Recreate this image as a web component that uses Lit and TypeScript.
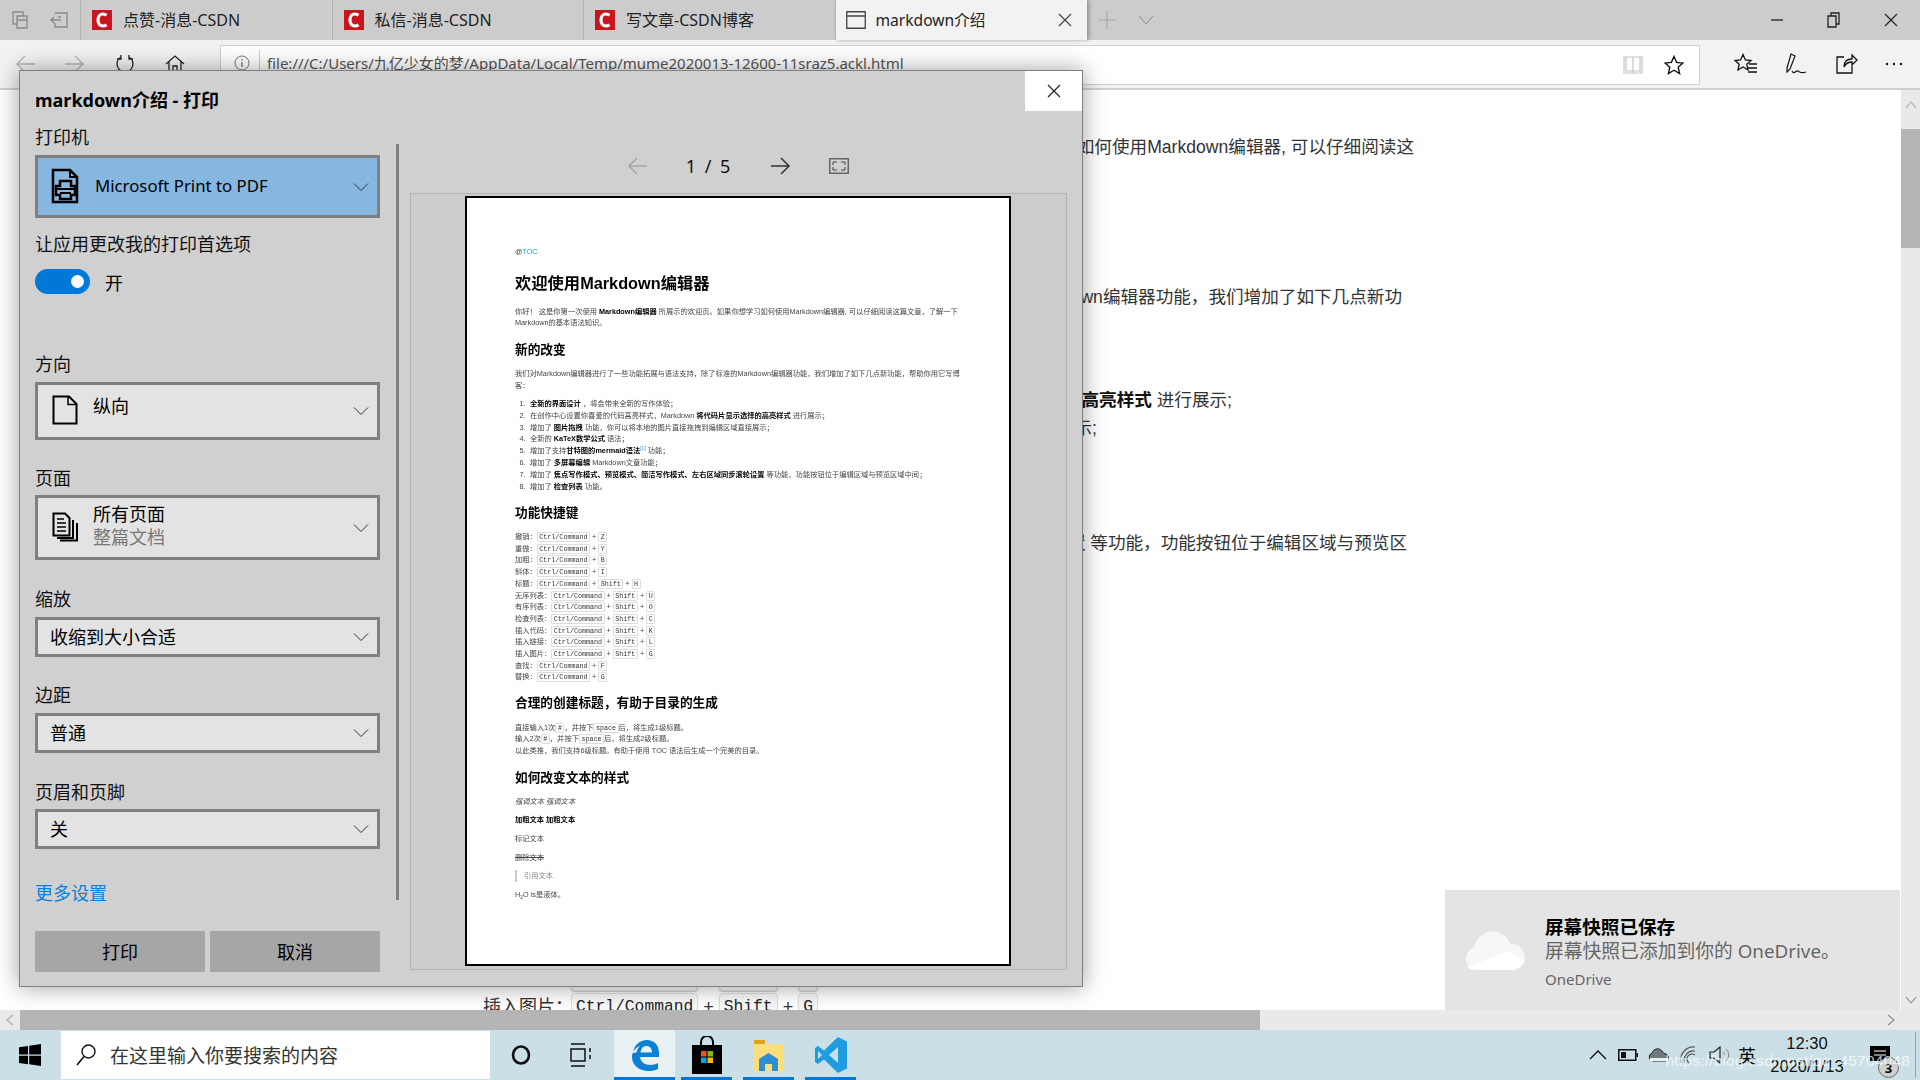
import { LitElement, html, css } from "lit";
import { customElement } from "lit/decorators.js";

const chevron = html`<svg class="chev" width="16" height="10" viewBox="0 0 16 10"><path d="M1 1.5 8 8.5 15 1.5" fill="none" stroke="#333" stroke-width="1"/></svg>`;

const csdn = html`<svg width="20" height="20" viewBox="0 0 20 20"><rect width="20" height="20" fill="#c9151e"/><path d="M14.5 5.2C13.3 4.3 12 4 10.8 4 8 4 6 6.500 6 10s2 6 4.800 6c1.200 0 2.500-.3 3.700-1.200" fill="none" stroke="#fff" stroke-width="3.200"/></svg>`;

const printerIcon = html`<svg width="28" height="36" viewBox="0 0 28 36"><path d="M2 2H19L26 9V34H2Z" fill="none" stroke="#000" stroke-width="2.500"/><path d="M19 2V9H26" fill="none" stroke="#000" stroke-width="2"/><path d="M9 13H20V18H24V27H20V31H9V27H5V18H9Z" fill="none" stroke="#000" stroke-width="2.500"/><path d="M5 21H24M9 25H20" stroke="#000" stroke-width="2"/></svg>`;

const pageIcon = html`<svg width="26" height="30" viewBox="0 0 26 30"><path d="M1.500 1.500H17L24.500 9V28.500H1.500Z" fill="none" stroke="#000" stroke-width="2"/><path d="M16 1.500V9.500H24.500" fill="none" stroke="#000" stroke-width="1.500"/></svg>`;

const pagesIcon = html`<svg width="26" height="30" viewBox="0 0 26 30"><path d="M1.500 1.500H13L17.500 6V23.500H1.500Z" fill="none" stroke="#000" stroke-width="2"/><path d="M5 26H21V8M8 28.500H25V11" fill="none" stroke="#000" stroke-width="2"/><path d="M5 7H12M5 11H14M5 15H14M5 19H14" stroke="#000" stroke-width="1.500"/></svg>`;

const windowsLogo = html`<svg width="22" height="22" viewBox="0 0 22 22"><path d="M0 3.200 9 2V10.500H0ZM10.200 1.800 22 0V10.500H10.200ZM0 11.700H9V20.200L0 19ZM10.200 11.700H22V22L10.200 20.300Z" fill="#000"/></svg>`;

const edgeIcon = html`<svg width="30" height="32" viewBox="0 0 30 32"><path d="M3 14C4 6 10 1 17 1c7 0 12 5 12 13v4H10c.5 5 5 8 10 8 3 0 6-1 8-2v6c-3 1.500-6 2-9 2C9 32 2 26 2 18c0-5 3-9 8-11-2 2-3 4-3.500 6.500ZM10.500 13.500H22c0-4-2-6.500-5.500-6.500S11 9.500 10.500 13.500Z" fill="#0a7fd6" fill-rule="evenodd"/></svg>`;

const storeIcon = html`<svg width="30" height="38" viewBox="0 0 30 38"><path d="M9 10V6a6 6 0 0 1 12 0V10" fill="none" stroke="#000" stroke-width="2"/><rect y="9" width="30" height="29" fill="#000"/><rect x="9" y="15" width="5.500" height="5.500" fill="#f25022"/><rect x="15.500" y="15" width="5.500" height="5.500" fill="#7fba00"/><rect x="9" y="21.500" width="5.500" height="5.500" fill="#00a4ef"/><rect x="15.500" y="21.500" width="5.500" height="5.500" fill="#ffb900"/></svg>`;

const folderIcon = html`<svg width="29" height="32" viewBox="0 0 29 32"><path d="M0 1H11V6H0Z" fill="#e0a020"/><rect y="5" width="29" height="27" fill="#fbdd7c"/><path d="M5 32V20L14.500 14 24 20V32H18V25H11V32Z" fill="#2d8ed0"/></svg>`;

const vscodeIcon = html`<svg width="32" height="36" viewBox="0 0 32 36"><path d="M23 0 32 4.500V31.500L23 36 9 22.500 3 27 0 25V11L3 9 9 13.500ZM23 10 14 18 23 26ZM3 14V22L7 18Z" fill="#1f9ce0" fill-rule="evenodd"/></svg>`;

interface Shortcut { label: string; keys: string[]; }
const shortcuts: Shortcut[] = [
  { label: "撤销：", keys: ["Ctrl/Command", "Z"] },
  { label: "重做：", keys: ["Ctrl/Command", "Y"] },
  { label: "加粗：", keys: ["Ctrl/Command", "B"] },
  { label: "斜体：", keys: ["Ctrl/Command", "I"] },
  { label: "标题：", keys: ["Ctrl/Command", "Shift", "H"] },
  { label: "无序列表：", keys: ["Ctrl/Command", "Shift", "U"] },
  { label: "有序列表：", keys: ["Ctrl/Command", "Shift", "O"] },
  { label: "检查列表：", keys: ["Ctrl/Command", "Shift", "C"] },
  { label: "插入代码：", keys: ["Ctrl/Command", "Shift", "K"] },
  { label: "插入链接：", keys: ["Ctrl/Command", "Shift", "L"] },
  { label: "插入图片：", keys: ["Ctrl/Command", "Shift", "G"] },
  { label: "查找：", keys: ["Ctrl/Command", "F"] },
  { label: "替换：", keys: ["Ctrl/Command", "G"] },
];

const docLines = [
  { end: 487, cls: "d1", t: html`如果你想学习如何使用Markdown编辑器, 可以仔细阅读这` },
  { end: 499, cls: "d2", t: html`除了标准的Markdown编辑器功能，我们增加了如下几点新功` },
  { end: 669, cls: "d3", t: html`Markdown <b>将代码片显示选择的高亮样式</b> 进行展示;` },
  { end: 804, cls: "d4", t: html`你可以将本地的图片直接拖拽到编辑区域直接展示;` },
  { end: 494, cls: "d5", t: html`<b>左右区域同步滚轮设置</b> 等功能，功能按钮位于编辑区域与预览区` },
];

@customElement("app-root")
export class AppRoot extends LitElement {
  static styles = css`
    :host { display: flex; flex-direction: column; width: 1920px; height: 1080px; overflow: hidden; position: relative; background: #fff; font-family: "Noto Sans", "Noto Sans CJK SC", sans-serif; color: #000; }
    * { box-sizing: border-box; }
    svg { display: block; flex: none; }

    .tabbar { height: 40px; background: #ccc; display: flex; align-items: center; flex: none; }
    .tab-tools { width: 80px; display: flex; align-items: center; padding-left: 12px; gap: 22px; }
    .tab { width: 251.500px; height: 40px; display: flex; align-items: center; padding-left: 11px; gap: 11px; border-left: 1px solid #b5b5b5; font-size: 16px; color: #222; }
    .tab span { position: relative; top: -1px; }
    .tab.active { background: #f2f2f2; width: 252px; box-shadow: 2px 0 4px rgba(0,0,0,.3); position: relative; color: #222; padding-left: 10px; gap: 10px; font-size: 15.600px; }
    .tab.active .x { margin-left: auto; margin-right: 15px; }
    .new { margin-left: 11px; }
    .drop { margin-left: 22px; }
    .win { margin-left: auto; display: flex; align-items: center; margin-right: 1px; }
    .win span { width: 57px; display: flex; justify-content: center; }

    .toolbar { height: 50px; background: #f2f2f2; border-bottom: 2px solid #d0d0d0; display: flex; align-items: center; flex: none; padding-left: 15px; }
    .nav-btn { width: 50px; display: flex; }
    .url { position: absolute; left: 220px; top: 45px; width: 1480px; height: 40px; background: #fff; border: 1px solid #d0d0d0; display: flex; align-items: center; padding-left: 13px; padding-bottom: 5px; font-size: 15px; color: #555; }
    .url .sep { width: 1px; height: 26px; background: #ccc; margin: 0 7px 0 9px; }
    .url .end { margin-left: auto; display: flex; align-items: center; gap: 21px; padding-right: 15px; padding-top: 5px; }
    .tb-right { position: absolute; right: 16px; top: 47px; height: 34px; display: flex; align-items: center; gap: 26px; }

    .content { flex: 1; display: grid; grid-template-columns: 1fr 19px; grid-template-rows: 1fr 20px; min-height: 0; position: relative; }
    .doc { overflow: hidden; padding-top: 42px; font-size: 17.600px; line-height: 28px; color: #333; font-family: "Liberation Sans", "Noto Sans CJK SC", sans-serif; }
    .line { white-space: nowrap; text-align: right; height: 28px; display: flex; justify-content: flex-end; }
    .line b { color: #111; }
    .d1 { position: relative; top: 1px; }
    .d2 { margin-top: 123px; } .d3 { margin-top: 75px; } .d5 { margin-top: 87px; }
    .rows { margin-top: 402px; padding-left: 483px; }
    .row { display: flex; align-items: center; height: 32px; gap: 5px; color: #333; font-size: 18px; white-space: nowrap; }
    .row + .row { margin-top: 2px; }
    .row .k { height: 32px; border: 1px solid #ddd; border-radius: 4px; background: #f8f8f8; font: 16.300px/26px "Liberation Mono", monospace; padding: 0 4px; color: #222; box-shadow: 0 1px 1px #ccc; }
    .row .lab { width: 82px; margin-right: 1px; position: relative; top: -2px; }
    .row .pl { position: relative; top: -2px; }

    .vscroll { background: #e9e9e9; display: flex; flex-direction: column; align-items: center; position: relative; }
    .vscroll .up { height: 39px; display: flex; align-items: center; justify-content: center; width: 100%; padding-bottom: 10px; }
    .vscroll .thumb { width: 100%; height: 119px; background: #b5b5b5; }
    .vscroll .down { margin-top: auto; height: 20px; display: flex; align-items: center; }
    .hscroll { background: #e9e9e9; display: flex; align-items: center; position: relative; grid-column: 1; }
    .hscroll .arrow { width: 20px; display: flex; justify-content: center; }
    .hscroll .thumb { width: 1240px; height: 20px; background: #b5b5b5; }
    .hscroll .arrow.r { margin-left: auto; width: 15px; margin-right: 3px; }
    .corner { background: #e9e9e9; }

    .toast { position: absolute; right: 20px; bottom: 20px; width: 455px; height: 120px; background: #e4e4e4; display: flex; padding: 25px 0 0 20px; }
    .toast .cloud { margin-top: 15px; }
    .toast .tx { margin-left: 20px; display: flex; flex-direction: column; }
    .toast .t1 { font-weight: 700; font-size: 18.600px; line-height: 24px; color: #000; }
    .toast .t2 { font-size: 18.800px; line-height: 24px; color: #666; }
    .toast .t3 { font-size: 15px; line-height: 24px; margin-top: 4px; color: #666; }

    .taskbar { height: 50px; background: #cbe0e6; display: flex; align-items: center; flex: none; position: relative; }
    .start { width: 61px; display: flex; justify-content: center; padding-right: 2px; }
    .search { width: 429px; height: 48px; background: #fff; display: flex; align-items: center; padding-left: 15px; gap: 14px; font-size: 19px; color: #333; }
    .slot { width: 61px; height: 50px; display: flex; align-items: center; justify-content: center; }
    .slot.tv { width: 60px; margin-right: 3px; }
    .app { height: 50px; display: flex; align-items: center; justify-content: center; border-bottom: 3px solid #0078d7; padding-top: 3px; width: 51px; margin-right: 11px; }
    .app.edge { width: 61px; margin-right: 6px; background: #e7f1f4; }
    .tray { margin-left: auto; display: flex; align-items: center; height: 50px; }
    .tray > div { display: flex; align-items: center; justify-content: center; height: 50px; }
    .tray .w30 { width: 30px; } .tray .w32 { width: 32px; }
    .tray .ime { width: 24px; font-size: 18px; }
    .clock { width: 96px; flex-direction: column; font-size: 16.500px; line-height: 23px; color: #111; font-family: "Liberation Sans", sans-serif; }
    .action { width: 50px; position: relative; }
    .badge { position: absolute; left: 23px; top: 27px; width: 21px; height: 21px; border-radius: 50%; border: 1px solid #666; background: #cfcfcf; font-size: 13px; font-weight: 700; display: flex; align-items: center; justify-content: center; }
    .sd { width: 15px; justify-content: flex-end !important; padding-right: 4px; }
    .sd i { display: block; width: 1px; height: 46px; background: #8fa5ab; }
    .mark { position: absolute; right: 10px; top: 20px; font: 15.500px/22px "Liberation Sans", sans-serif; color: rgba(255,255,255,.72); white-space: nowrap; letter-spacing: .2px; }

    .dialog { position: absolute; left: 19px; top: 70px; width: 1064px; height: 917px; background: #d0d0d0; border: 1px solid #808080; box-shadow: 0 0 22px rgba(0,0,0,.38); display: flex; flex-direction: column; }
    .head { height: 41px; padding: 17px 0 0 15px; font-size: 18px; line-height: 24px; font-weight: 700; flex: none; }
    .close { position: absolute; right: 0; top: 0; width: 57px; height: 40px; background: #fff; display: flex; align-items: center; justify-content: center; }
    .body { flex: 1; display: flex; min-height: 0; }
    .left { width: 390px; padding-left: 15px; position: relative; flex: none; }
    .bar { position: absolute; left: 376px; top: 32px; width: 3px; height: 756px; background: #808080; }
    .label { font-size: 18px; line-height: 24px; color: #111; white-space: nowrap; }
    .sec { width: 345px; }
    .s0 { margin-top: 13px; } .s1 { margin-top: 14px; } .s2 { margin-top: 58px; } .s3 { margin-top: 26px; } .s4 { margin-top: 27px; } .s5 { margin-top: 26px; } .s6 { margin-top: 27px; }
    .select { margin-top: 6px; border: 3px solid #808080; background: #e3e3e3; display: flex; align-items: center; padding-left: 12px; padding-bottom: 2px; height: 40px; font-size: 18px; position: relative; }
    .select .chev { position: absolute; right: 8px; top: 50%; margin-top: -5px; }
    .s0 .select { height: 63px; background: #86b7e0; padding-left: 13px; }
    .s0 .select span { margin-left: 16px; font-size: 16.800px; }
    .s2 .select { height: 58px; margin-top: 6px; padding-left: 14px; align-items: flex-start; padding-top: 10px; }
    .s2 .select span { margin-left: 15px; margin-top: -3px; }
    .s3 .select { height: 65px; margin-top: 5px; padding-left: 14px; }
    .s3 .two { margin-left: 15px; display: flex; flex-direction: column; line-height: 23px; margin-top: -1px; }
    .s3 .two em { font-style: normal; color: #777; }
    .s6 .select { margin-top: 5px; }
    .toggle-row { display: flex; align-items: center; margin-top: 13px; gap: 15px; height: 25px; font-size: 18px; }
    .toggle { width: 55px; height: 25px; border-radius: 13px; background: #0078d7; position: relative; }
    .toggle i { position: absolute; right: 6.500px; top: 5.500px; width: 13px; height: 13px; border-radius: 50%; background: #fff; }
    .more { margin-top: 32px; font-size: 18px; line-height: 24px; color: #0a7fdc; }
    .btns { display: flex; gap: 5px; margin-top: 26px; width: 345px; }
    .btn { width: 170px; height: 41px; background: #a6a6a6; display: flex; align-items: center; justify-content: center; font-size: 18px; padding-bottom: 2px; }

    .right { flex: 1; display: flex; flex-direction: column; min-width: 0; }
    .pnav { display: flex; align-items: center; height: 28px; margin: 40px 0 13px 217px; }
    .pnav .num { width: 124px; text-align: center; font-size: 18px; color: #111; letter-spacing: 2px; }
    .pnav .fit { margin-left: 38px; }
    .pane { width: 657px; height: 777px; background: #ccc; border: 1px solid #b4b4b4; padding: 2px 0 0 54px; flex: none; }
    .paper { width: 546px; height: 770px; background: #fff; border: 2px solid #000; padding: 48px 0 0 48px; overflow: hidden; font-size: 7.280px; line-height: 11.700px; color: #444; white-space: nowrap; font-family: "Liberation Sans", "Noto Sans CJK SC", sans-serif; }
    .paper .inner { filter: blur(.35px); }
    .paper b { color: #000; }
    .toc { height: 12px; line-height: 12px; } .toc a { color: #1b9ae0; }
    .h1 { font-size: 16.300px; line-height: 24px; font-weight: 700; color: #000; margin-top: 13px; }
    .h2 { font-size: 12.700px; line-height: 18px; font-weight: 700; color: #000; }
    .h2.a { margin-top: 12px; } .h2.b { margin-top: 11px; }
    .pp { margin-top: 9.500px; }
    .h1 + .pp { margin-top: 10.500px; }
    .ol { margin-top: 6px; }
    .ol div { padding-left: 4.500px; line-height: 11.850px; }
    .ol i { font-style: normal; display: inline-block; width: 10.500px; }
    .sc { margin-top: 9.500px; }
    .sc div { height: 11.700px; }
    .kb { font-family: "Liberation Mono", monospace; font-size: 6.700px; line-height: 9px; padding: 0 1.500px; border: .5px solid #ddd; border-radius: 1px; color: #333; }
    .plain { margin-top: 7px; height: 11.700px; }
    .h2 + .plain { margin-top: 9px; }
    .quote { border-left: 2px solid #ccc; padding-left: 7px; color: #888; }
    .del { text-decoration: line-through; }
    sub { font-size: 5px; line-height: 0; }
    sup { font-size: 5px; line-height: 0; color: #1b9ae0; }
  `;

  private sc(s: Shortcut) {
    return html`<div>${s.label}${s.keys.map((k, i) => html`${i ? " + " : ""}<span class="kb">${k}</span>`)}</div>`;
  }

  private paper() {
    return html`<div class="paper"><div class="inner">
      <div class="toc">@<a>TOC</a></div>
      <div class="h1">欢迎使用Markdown编辑器</div>
      <div class="pp">你好！ 这是你第一次使用 <b>Markdown编辑器</b> 所展示的欢迎页。如果你想学习如何使用Markdown编辑器, 可以仔细阅读这篇文章，了解一下<br>Markdown的基本语法知识。</div>
      <div class="h2 a">新的改变</div>
      <div class="pp">我们对Markdown编辑器进行了一些功能拓展与语法支持，除了标准的Markdown编辑器功能，我们增加了如下几点新功能，帮助你用它写博<br>客：</div>
      <div class="ol">
        <div><i>1.</i><b>全新的界面设计</b> ，将会带来全新的写作体验；</div>
        <div><i>2.</i>在创作中心设置你喜爱的代码高亮样式，Markdown <b>将代码片显示选择的高亮样式</b> 进行展示；</div>
        <div><i>3.</i>增加了 <b>图片拖拽</b> 功能，你可以将本地的图片直接拖拽到编辑区域直接展示；</div>
        <div><i>4.</i>全新的 <b>KaTeX数学公式</b> 语法；</div>
        <div><i>5.</i>增加了支持<b>甘特图的mermaid语法</b><sup>[1]</sup> 功能；</div>
        <div><i>6.</i>增加了 <b>多屏幕编辑</b> Markdown文章功能；</div>
        <div><i>7.</i>增加了 <b>焦点写作模式、预览模式、简洁写作模式、左右区域同步滚轮设置</b> 等功能，功能按钮位于编辑区域与预览区域中间；</div>
        <div><i>8.</i>增加了 <b>检查列表</b> 功能。</div>
      </div>
      <div class="h2 b">功能快捷键</div>
      <div class="sc">${shortcuts.map((s) => this.sc(s))}</div>
      <div class="h2 b">合理的创建标题，有助于目录的生成</div>
      <div class="sc">
        <div>直接输入1次<span class="kb">#</span>，并按下<span class="kb">space</span>后，将生成1级标题。</div>
        <div>输入2次<span class="kb">#</span>，并按下<span class="kb">space</span>后，将生成2级标题。</div>
        <div>以此类推，我们支持6级标题。有助于使用 TOC 语法后生成一个完美的目录。</div>
      </div>
      <div class="h2 a">如何改变文本的样式</div>
      <div class="plain"><em>强调文本 强调文本</em></div>
      <div class="plain"><b>加粗文本 加粗文本</b></div>
      <div class="plain">标记文本</div>
      <div class="plain del">删除文本</div>
      <div class="plain quote">引用文本</div>
      <div class="plain">H<sub>2</sub>O is是液体。</div>
    </div></div>`;
  }

  private dialog() {
    return html`<div class="dialog">
      <div class="head">markdown介绍 - 打印</div>
      <div class="close"><svg width="14" height="14" viewBox="0 0 14 14"><path d="M1 1 13 13M13 1 1 13" stroke="#222" stroke-width="1.200"/></svg></div>
      <div class="body">
        <div class="left">
          <div class="bar"></div>
          <div class="sec s0"><div class="label">打印机</div>
            <div class="select">${printerIcon}<span>Microsoft Print to PDF</span>${chevron}</div></div>
          <div class="sec s1"><div class="label">让应用更改我的打印首选项</div>
            <div class="toggle-row"><div class="toggle"><i></i></div>开</div></div>
          <div class="sec s2"><div class="label">方向</div>
            <div class="select">${pageIcon}<span>纵向</span>${chevron}</div></div>
          <div class="sec s3"><div class="label">页面</div>
            <div class="select">${pagesIcon}<div class="two"><span>所有页面</span><em>整篇文档</em></div>${chevron}</div></div>
          <div class="sec s4"><div class="label">缩放</div><div class="select">收缩到大小合适${chevron}</div></div>
          <div class="sec s5"><div class="label">边距</div><div class="select">普通${chevron}</div></div>
          <div class="sec s6"><div class="label">页眉和页脚</div><div class="select">关${chevron}</div></div>
          <div class="more">更多设置</div>
          <div class="btns"><div class="btn">打印</div><div class="btn">取消</div></div>
        </div>
        <div class="right">
          <div class="pnav">
            <svg width="20" height="20" viewBox="0 0 20 20"><path d="M10 2 2 10 10 18M2 10H20" fill="none" stroke="#a4a4a4" stroke-width="1.500"/></svg>
            <div class="num">1 / 5</div>
            <svg width="20" height="20" viewBox="0 0 20 20"><path d="M10 2 18 10 10 18M18 10H0" fill="none" stroke="#333" stroke-width="1.500"/></svg>
            <svg class="fit" width="20" height="16" viewBox="0 0 20 16"><rect x=".75" y=".75" width="18.500" height="14.500" fill="none" stroke="#666" stroke-width="1.500"/><path d="M4 7V4H8M12 4H16V7M16 9V12H12M8 12H4V9" fill="none" stroke="#444"/></svg>
          </div>
          <div class="pane">${this.paper()}</div>
        </div>
      </div>
    </div>`;
  }

  render() {
    const csdnTabs = ["点赞-消息-CSDN", "私信-消息-CSDN", "写文章-CSDN博客"];
    return html`
      <div class="tabbar">
        <div class="tab-tools">
          <svg width="16" height="18" viewBox="0 0 16 18"><path d="M1 1H11V5M5 5H15V17H5ZM1 1V13H5M5 9H15" fill="none" stroke="#888" stroke-width="1.300"/></svg>
          <svg width="18" height="16" viewBox="0 0 18 16"><path d="M5 1H17V15H5V11M1 8H11M4 5 1 8 4 11M8 5H11" fill="none" stroke="#888" stroke-width="1.300"/></svg>
        </div>
        ${csdnTabs.map((t) => html`<div class="tab">${csdn}<span>${t}</span></div>`)}
        <div class="tab active">
          <svg width="20" height="18" viewBox="0 0 20 18"><path d="M.75.75H19.250V17.250H.75ZM.75 5H19.250" fill="none" stroke="#444" stroke-width="1.300"/></svg>
          <span>markdown介绍</span>
          <svg class="x" width="14" height="14" viewBox="0 0 14 14"><path d="M1 1 13 13M13 1 1 13" stroke="#444" stroke-width="1.200"/></svg>
        </div>
        <svg class="new" width="18" height="18" viewBox="0 0 18 18"><path d="M9 0V18M0 9H18" stroke="#a8a8a8" stroke-width="1.200"/></svg>
        <svg class="drop" width="16" height="10" viewBox="0 0 16 10"><path d="M1 1 8 9 15 1" fill="none" stroke="#999" stroke-width="1.100"/></svg>
        <div class="win">
          <span><svg width="12" height="2" viewBox="0 0 12 2"><path d="M0 1H12" stroke="#222" stroke-width="1.300"/></svg></span>
          <span><svg width="13" height="16" viewBox="0 0 13 16"><path d="M1 4H9V15H1ZM4 4V1H12V12H9" fill="none" stroke="#222" stroke-width="1.300"/></svg></span>
          <span><svg width="14" height="14" viewBox="0 0 14 14"><path d="M1 1 13 13M13 1 1 13" stroke="#222" stroke-width="1.200"/></svg></span>
        </div>
      </div>

      <div class="toolbar">
        <div class="nav-btn"><svg width="20" height="20" viewBox="0 0 20 20"><path d="M10 2 2 10 10 18M2 10H20" fill="none" stroke="#b4b4b4" stroke-width="1.300"/></svg></div>
        <div class="nav-btn"><svg width="20" height="20" viewBox="0 0 20 20"><path d="M10 2 18 10 10 18M18 10H0" fill="none" stroke="#b4b4b4" stroke-width="1.300"/></svg></div>
        <div class="nav-btn"><svg width="20" height="20" viewBox="0 0 20 20"><path d="M6 3A8 8 0 1 0 14 3M6 1V5H2M14 1V5H18" fill="none" stroke="#222" stroke-width="1.300"/></svg></div>
        <div class="nav-btn"><svg width="20" height="20" viewBox="0 0 20 20"><path d="M1 10 10 2 19 10M4 8V18H8V12H12V18H16V8" fill="none" stroke="#222" stroke-width="1.300"/></svg></div>
      </div>
      <div class="url">
        <svg width="16" height="16" viewBox="0 0 16 16"><circle cx="8" cy="8" r="7" fill="none" stroke="#777"/><path d="M8 7V12M8 4V5.500" stroke="#777" stroke-width="1.300"/></svg>
        <div class="sep"></div>
        <span>file:///C:/Users/九亿少女的梦/AppData/Local/Temp/mume2020013-12600-11sraz5.ackl.html</span>
        <div class="end">
          <svg width="20" height="20" viewBox="0 0 20 20"><path d="M1 2H10V18H1ZM10 2H19V18H10ZM3 2V16H17V2" fill="none" stroke="#c4c4c4" stroke-width="1.200"/></svg>
          <svg width="20" height="20" viewBox="0 0 20 20"><path d="M10 1.500 12.600 7.400 19 8 14.200 12.200 15.600 18.500 10 15.200 4.400 18.500 5.800 12.200 1 8 7.400 7.400Z" fill="none" stroke="#111" stroke-width="1.400"/></svg>
        </div>
      </div>
      <div class="tb-right">
        <svg width="24" height="22" viewBox="0 0 24 22"><path d="M9 1.500 11.400 7 17 7.500 12.800 11.200 14 17 9 14 4 17 5.200 11.200 1 7.500 6.600 7Z" fill="none" stroke="#111" stroke-width="1.300"/><path d="M15 11H23M14 15H23M14 19H23" stroke="#111" stroke-width="1.300"/></svg>
        <svg width="24" height="24" viewBox="0 0 24 24"><path d="M7 2 11 4 6 17 3 20 3 16ZM8 19C10 23 12 18 14 19 16 20 17 22 22 20" fill="none" stroke="#111" stroke-width="1.200"/></svg>
        <svg width="24" height="24" viewBox="0 0 24 24"><path d="M10 5H3V21H18V14M10 15C10 9 13 7 18 7V3L23 8 18 13V10C14 10 12 11 10 15Z" fill="none" stroke="#111" stroke-width="1.300"/></svg>
        <svg width="20" height="4" viewBox="0 0 20 4"><circle cx="3" cy="2" r="1.200" fill="#111"/><circle cx="10" cy="2" r="1.200" fill="#111"/><circle cx="17" cy="2" r="1.200" fill="#111"/></svg>
      </div>

      <div class="content">
        <div class="doc">
          ${docLines.map((l) => html`<div class="line ${l.cls}" style="padding-right:${l.end}px"><span>${l.t}</span></div>`)}
          <div class="rows">
            <div class="row"><span class="lab">插入链接：</span><span class="k">Ctrl/Command</span><span class="pl">+</span><span class="k">Shift</span><span class="pl">+</span><span class="k">L</span></div>
            <div class="row"><span class="lab">插入图片：</span><span class="k">Ctrl/Command</span><span class="pl">+</span><span class="k">Shift</span><span class="pl">+</span><span class="k">G</span></div>
          </div>
        </div>
        <div class="vscroll">
          <div class="up"><svg width="12" height="8" viewBox="0 0 12 8"><path d="M1 7 6 1 11 7" fill="none" stroke="#aaa" stroke-width="1.100"/></svg></div>
          <div class="thumb"></div>
          <div class="down"><svg width="12" height="8" viewBox="0 0 12 8"><path d="M1 1 6 7 11 1" fill="none" stroke="#888" stroke-width="1.100"/></svg></div>
        </div>
        <div class="hscroll">
          <div class="arrow"><svg width="8" height="12" viewBox="0 0 8 12"><path d="M7 1 1 6 7 11" fill="none" stroke="#aaa" stroke-width="1.100"/></svg></div>
          <div class="thumb"></div>
          <div class="arrow r"><svg width="8" height="12" viewBox="0 0 8 12"><path d="M1 1 7 6 1 11" fill="none" stroke="#888" stroke-width="1.100"/></svg></div>
        </div>
        <div class="corner"></div>
        <div class="toast">
          <svg class="cloud" width="60" height="40" viewBox="0 0 60 40"><path d="M12 40A11.500 11.500 0 0 1 9 17.500 C11 6 23 -2 35 3 41 5.500 44 10 45.500 14 C54 14 60 20 60 28 60 35 54 40 47 40Z" fill="#f7f7f7"/><path d="M2 37C5 39 8 40 12 40H47C53 40 58 36 59.500 31L44 21 Z" fill="#fff"/></svg>
          <div class="tx">
            <div class="t1">屏幕快照已保存</div>
            <div class="t2">屏幕快照已添加到你的 OneDrive。</div>
            <div class="t3">OneDrive</div>
          </div>
        </div>
      </div>

      <div class="taskbar">
        <div class="start">${windowsLogo}</div>
        <div class="search">
          <svg width="20" height="22" viewBox="0 0 20 22"><circle cx="12.500" cy="7.500" r="6.500" fill="none" stroke="#111" stroke-width="1.400"/><path d="M8 12.500 1 21" stroke="#111" stroke-width="1.600"/></svg>
          <span>在这里输入你要搜索的内容</span>
        </div>
        <div class="slot"><svg width="20" height="20" viewBox="0 0 20 20"><ellipse cx="10" cy="10" rx="8" ry="8.500" fill="none" stroke="#111" stroke-width="2.600"/></svg></div>
        <div class="slot tv"><svg width="22" height="24" viewBox="0 0 22 24"><path d="M1 1H15M1 23H15M1 6H15V18H1ZM20 5V9M20 12V16" fill="none" stroke="#111" stroke-width="1.500"/></svg></div>
        <div class="app edge">${edgeIcon}</div>
        <div class="app">${storeIcon}</div>
        <div class="app">${folderIcon}</div>
        <div class="app">${vscodeIcon}</div>
        <div class="tray">
          <div class="w30"><svg width="18" height="10" viewBox="0 0 18 10"><path d="M1 9 9 1 17 9" fill="none" stroke="#111" stroke-width="1.400"/></svg></div>
          <div class="w30"><svg width="20" height="12" viewBox="0 0 20 12"><rect x=".75" y=".75" width="17" height="10.500" fill="none" stroke="#111" stroke-width="1.500"/><rect x="3" y="3" width="5" height="6" fill="#111"/><rect x="18.500" y="4" width="1.500" height="4" fill="#111"/></svg></div>
          <div class="w30"><svg width="21" height="14" viewBox="0 0 21 14"><path d="M5 13A4 4 0 0 1 4 5.200C5 1 11 -1 14 3 15 4 15.500 5 16 5.500 19 5.500 20.500 8 20.500 10 20.500 12 19 13 17 13Z" fill="#6e7a7e" stroke="#222"/><path d="M2 10H20V13H2Z" fill="#eee"/></svg></div>
          <div class="w32"><svg width="22" height="18" viewBox="0 0 22 18"><path d="M3 17A13 13 0 0 1 17 1M7 17A9 9 0 0 1 17 5M11 17A5 5 0 0 1 17 9" fill="none" stroke="#555" stroke-width="1.200"/></svg></div>
          <div class="w30"><svg width="22" height="18" viewBox="0 0 22 18"><path d="M1 6H5L11 1V17L5 12H1Z" fill="none" stroke="#222" stroke-width="1.200"/><path d="M14 6A4 4 0 0 1 14 12M17 3A8 8 0 0 1 17 15" fill="none" stroke="#888"/></svg></div>
          <div class="ime">英</div>
          <div class="clock"><span>12:30</span><span>2020/1/13</span></div>
          <div class="action"><svg width="20" height="19" viewBox="0 0 20 19"><path d="M0 0H20V15H13L10 19V15H0Z" fill="#000"/><path d="M4 5H16M4 9H16" stroke="#fff" stroke-width="1.200"/></svg><div class="badge">3</div></div>
          <div class="sd"><i></i></div>
        </div>
        <div class="mark">https://blog.csdn.net/qq_45704048</div>
      </div>

      ${this.dialog()}
    `;
  }
}
